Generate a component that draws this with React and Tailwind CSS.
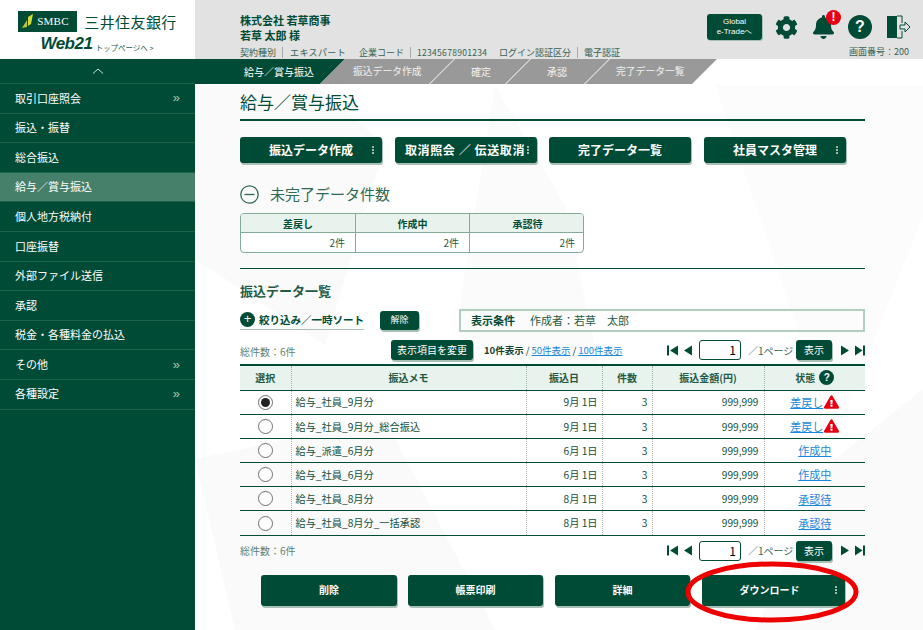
import React from "react";
import { FaCog, FaBell, FaExclamationTriangle } from "react-icons/fa";

const menu = [
  ["取引口座照会", true], ["振込・振替"], ["総合振込"], ["給与／賞与振込", false, true], ["個人地方税納付"], ["口座振替"],
  ["外部ファイル送信"], ["承認"], ["税金・各種料金の払込"], ["その他", true], ["各種設定", true],
];

const rows = [
  ["給与_社員_9月分", "9月 1日", "差戻し", true, true],
  ["給与_社員_9月分_総合振込", "9月 1日", "差戻し", true],
  ["給与_派遣_6月分", "6月 1日", "作成中"],
  ["給与_社員_6月分", "6月 1日", "作成中"],
  ["給与_社員_8月分", "8月 1日", "承認待"],
  ["給与_社員_8月分_一括承認", "8月 1日", "承認待"],
];

function Dots() {
  return (
    <span className="absolute right-[8px] top-1/2 -translate-y-1/2 flex flex-col gap-[1px]">
      <i className="block w-[2px] h-[2px] bg-[#9fbbb0]" />
      <i className="block w-[2px] h-[2px] bg-[#9fbbb0]" />
      <i className="block w-[2px] h-[2px] bg-[#9fbbb0]" />
    </span>
  );
}

function Btn({ children, className = "", dots }) {
  return (
    <div className={`relative flex items-center justify-center rounded-[3px] bg-[#004b35] text-white font-bold pb-[1px] shadow-[1px_2px_0_#a9c0b6] ${className}`}>
      {children}
      {dots && <Dots />}
    </div>
  );
}

function Pager() {
  return (
    <div className="flex items-center h-[20px] text-[#35614f]">
      <svg width="11" height="11" viewBox="0 0 11 11" className="fill-[#004b35]"><rect x="0" y="0.5" width="2" height="10" /><path d="M11 0.5v10L3 5.5z" /></svg>
      <svg width="10" height="11" viewBox="0 0 10 11" className="ml-[5px] fill-[#004b35]"><path d="M9 0.5v10L1 5.5z" /></svg>
      <div className="ml-[6px] w-[42px] h-[20px] border border-[#004b35] rounded-[3px] bg-white text-right pr-[4px] text-[12px] leading-[18px] text-black">1</div>
      <span className="ml-[7px] w-[48px] text-[10px] whitespace-nowrap">／1ページ</span>
      <Btn className="w-[36px] h-[20px] text-[10px] font-normal">表示</Btn>
      <svg width="10" height="11" viewBox="0 0 10 11" className="ml-[8px] fill-[#004b35]"><path d="M1 0.5v10L9 5.5z" /></svg>
      <svg width="10" height="11" viewBox="0 0 10 11" className="ml-[5px] fill-[#004b35]"><path d="M0 0.5v10L7.500 5.5z" /><rect x="8" y="0.5" width="2" height="10" /></svg>
    </div>
  );
}

const thClass = "font-bold text-[10px] text-[#1f5a45] border-r border-dotted border-[#9db5ab] last:border-r-0";
const tdClass = "border-r border-dotted border-[#b5b5b5] last:border-r-0 text-[10.200px] text-[#0f4f3b] p-0";

export default function App() {
  return (
    <div className="relative w-[923px] h-[630px] overflow-hidden bg-white font-['Noto_Sans_CJK_JP','Noto_Sans',sans-serif] text-[#004b35]">
      {/* header */}
      <header className="flex h-[59px] bg-[#e2e2e2]">
        <div className="w-[195px] h-full bg-white flex flex-col items-center pt-[11px]">
          <div className="flex items-center">
            <div className="flex items-center w-[59px] h-[21px] bg-[#004b35]">
              <svg width="20" height="21" viewBox="0 0 20 21"><path d="M4 17 L9 9 L9 16z" fill="#b7c72e" /><path d="M10 15 L10 6 L15 3 L13 13z" fill="#d5d936" /></svg>
              <span className="text-[11px] leading-none text-white font-['Liberation_Serif',serif] tracking-[0.2px] -ml-[1px]">SMBC</span>
            </div>
            <span className="ml-[7px] text-[15px] leading-none tracking-[0.4px] text-[#004b35]">三井住友銀行</span>
          </div>
          <div className="flex items-end -ml-[1px] mt-[3px] leading-none">
            <span className="text-[17px] font-bold italic font-['Liberation_Sans',sans-serif] tracking-[-0.5px] text-[#004b35]">Web21</span>
            <span className="ml-[3px] mb-[1px] text-[7.500px] text-[#1f5a45]">トップページへ &gt;</span>
          </div>
        </div>
        <div className="flex-1 flex justify-between pl-[45px] pr-[13px]">
          <div className="pt-[13px]">
            <div className="text-[11px] leading-[15px] font-bold">株式会社 若草商事</div>
            <div className="text-[11px] leading-[14px] font-bold">若草 太郎 様</div>
            <div className="flex items-center mt-[5px] text-[9px] leading-[11px] text-[#35614f] whitespace-nowrap">
              <span className="pr-[6px] border-r border-[#a8a8a8]">契約種別</span>
              <span className="pl-[7px] w-[75px] tracking-[0.4px]">エキスパート</span>
              <span className="ml-[1px] pr-[6px] border-r border-[#a8a8a8]">企業コード</span>
              <span className="pl-[6px] w-[88px] text-[8.500px] tracking-[0.3px]">12345678901234</span>
              <span className="pr-[6px] border-r border-[#a8a8a8]">ログイン認証区分</span>
              <span className="pl-[6px]">電子認証</span>
            </div>
          </div>
          <div className="flex flex-col items-end">
            <div className="flex items-center h-[26px] mt-[14px]">
              <div className="flex items-center justify-center w-[55px] h-[26px] rounded-[3px] bg-[#004b35] text-white text-[8px] leading-[10px] text-center font-['Liberation_Sans',sans-serif] shadow-[1px_1px_0_#a9c0b6]">Global<br />e-Tradeへ</div>
              <FaCog className="ml-[13px] w-[23px] h-[23px] text-[#004b35]" />
              <div className="relative ml-[14px] w-[24px] h-[24px]">
                <FaBell className="w-[23px] h-[24px] text-[#004b35]" />
                <div className="absolute -top-[5px] left-[14px] w-[15px] h-[15px] rounded-full bg-[#e60012] text-white text-[12px] leading-[15px] font-bold text-center font-['Liberation_Sans',sans-serif]">!</div>
              </div>
              <div className="ml-[12px] w-[24px] h-[24px] rounded-full bg-[#004b35] text-white text-[16px] leading-[24px] font-bold text-center font-['Liberation_Sans',sans-serif]">?</div>
              <svg width="23" height="24" viewBox="0 0 23 24" className="ml-[15px]">
                <path d="M0 1h10v22H0z" fill="#004b35" />
                <path d="M10 1h5v7M15 16v7h-5M13 10h5V7l5 5-5 5v-3h-5z" fill="none" stroke="#004b35" strokeWidth="1" />
              </svg>
            </div>
            <div className="mt-[6px] mr-[1px] text-[9px] leading-[11px] text-[#35614f] whitespace-nowrap">画面番号：200</div>
          </div>
        </div>
      </header>

      <div className="flex h-[571px]">
        {/* sidebar */}
        <aside className="w-[195px] shrink-0 bg-[#004b35] text-white">
          <div className="h-[25px] flex items-center justify-center border-b border-[#1d6149]">
            <svg width="12" height="6" viewBox="0 0 12 6" fill="none" stroke="#cfe0d9" strokeWidth="1"><path d="M1 5.500L6 1l5 4.500" /></svg>
          </div>
          {menu.map(([t, chev, active]) => (
            <div key={t} className={`h-[29.6px] flex items-center justify-between pl-[15px] pr-[15px] pb-[1px] border-b border-[#1d6149] text-[11px] ${active ? "bg-[#46806b]" : ""}`}>
              <span>{t}</span>
              {chev && <span className="text-[13px] leading-none text-[#a9c4b8] font-['Liberation_Sans',sans-serif]">»</span>}
            </div>
          ))}
        </aside>

        {/* main */}
        <main className="relative flex-1">
          <svg className="absolute inset-0 w-full h-full" viewBox="0 0 728 571" preserveAspectRatio="none">
            <path d="M0 26h120l70 60-60 200L0 200z" fill="#fafafa" />
            <path d="M300 26l70 120 40 190-150-60z" fill="#fbfbfb" />
            <path d="M520 26h208v130L640 380z" fill="#fcfcfc" />
            <path d="M0 400l190-40 110 211H40z" fill="#fafafa" />
            <path d="M640 400l88-70v241H560z" fill="#fafafa" />
          </svg>
          {/* tabs */}
          <div className="relative flex h-[26px] text-[10px] text-[#f2f2f2] whitespace-nowrap">
            <div className="relative w-[150px] h-[25px] bg-[#004b35] [clip-path:polygon(0_0,100%_0,125px_100%,0_100%)] flex items-center pl-[49px] text-white">給与／賞与振込</div>
            <div className="w-[134px] -ml-[25px] h-[25px] bg-[#999999] [clip-path:polygon(25px_0,100%_0,109px_100%,0_100%)] flex items-center pl-[33px] text-[9.800px]">振込データ作成</div>
            <div className="w-[100px] -ml-[24px] h-[25px] bg-[#999999] [clip-path:polygon(25px_0,100%_0,75px_100%,0_100%)] flex items-center pl-[41px]">確定</div>
            <div className="w-[103px] -ml-[24px] h-[25px] bg-[#999999] [clip-path:polygon(25px_0,100%_0,78px_100%,0_100%)] flex items-center pl-[41px]">承認</div>
            <div className="w-[132px] -ml-[24px] h-[25px] bg-[#999999] [clip-path:polygon(25px_0,100%_0,107px_100%,0_100%)] flex items-center pl-[31px] text-[9.800px]">完了データ一覧</div>
          </div>

          <div className="relative w-[625px] ml-[45px]">
            <h1 className="h-[36px] text-[17px] leading-[33px] font-normal border-b-2 border-[#004b35]">給与／賞与振込</h1>

            <div className="flex mt-[16px] text-[12px]">
              <Btn className="w-[142px] h-[26px]" dots>振込データ作成</Btn>
              <Btn className="w-[142px] h-[26px] ml-[13px] tracking-[0.6px] pr-[2px]" dots>取消照会 ／ 伝送取消</Btn>
              <Btn className="w-[142px] h-[26px] ml-[12px]">完了データ一覧</Btn>
              <Btn className="w-[142px] h-[26px] ml-[13px]" dots>社員マスタ管理</Btn>
            </div>

            <div className="flex items-center mt-[22px] h-[19px]">
              <svg width="19" height="19" viewBox="0 0 19 19" fill="none" stroke="#2c6a55" strokeWidth="1.300"><circle cx="9.500" cy="9.500" r="8.700" /><path d="M4.500 9.500h10" /></svg>
              <span className="ml-[11px] text-[15px] text-[#2c6a55]">未完了データ件数</span>
            </div>

            <div className="grid grid-cols-[115px_114px_115px] w-[344px] mt-[9px] h-[40px] border border-[#82ab98] rounded-[4px] overflow-hidden text-[10px] bg-white">
              {["差戻し", "作成中", "承認待"].map((t, i) => (
                <div key={t} className={`h-[19px] leading-[19px] text-center font-bold bg-[#e9f3ee] border-b border-[#82ab98] ${i < 2 ? "border-r" : ""}`}>{t}</div>
              ))}
              {[0, 1, 2].map((i) => (
                <div key={i} className={`leading-[19px] text-right pr-[10px] text-[#1f5a45] ${i < 2 ? "border-r border-[#82ab98]" : ""}`}>2件</div>
              ))}
            </div>

            <div className="mt-[15px] border-t border-[#004b35]" />

            <div className="mt-[13px] text-[13px] leading-[17px] font-bold text-[#1f5a45]">振込データ一覧</div>

            <div className="flex items-start mt-[10px] h-[23px]">
              <div className="flex items-center w-[124px] h-[20px] mt-[1px] border-b border-[#a9c0b6]">
                <div className="shrink-0 w-[15px] h-[15px] rounded-full bg-[#004b35] text-white text-[13px] leading-[14px] text-center font-['Liberation_Sans',sans-serif]">+</div>
                <span className="ml-[4px] text-[10.500px] font-bold whitespace-nowrap">絞り込み／一時ソート</span>
              </div>
              <Btn className="w-[39px] h-[19px] ml-[16px] mt-[2px] text-[9px] font-normal">解除</Btn>
              <div className="flex items-center w-[406px] h-[23px] ml-[40px] border-2 border-[#b3cdbf] pl-[10px] text-[11px] text-[#1f5a45]">
                <span className="font-bold text-[#004b35]">表示条件</span>
                <span className="ml-[15px]">作成者：若草　太郎</span>
              </div>
            </div>

            <div className="flex items-center mt-[8px] h-[20px]">
              <span className="w-[151px] text-[10px] text-[#5c7f71] pt-[2px]">総件数：6件</span>
              <Btn className="w-[82px] h-[20px] text-[10px] font-normal">表示項目を変更</Btn>
              <span className="ml-[11px] text-[9.500px] whitespace-nowrap">
                <b className="text-[#123f30]">10件表示</b><span className="mx-[2px]">/</span><a className="text-[#1b87d8] underline">50件表示</a><span className="mx-[2px]">/</span><a className="text-[#1b87d8] underline">100件表示</a>
              </span>
              <div className="ml-auto"><Pager /></div>
            </div>

            <table className="w-full mt-[4px] table-fixed border-collapse border-t-2 border-[#004b35]">
              <colgroup>
                <col className="w-[51px]" /><col className="w-[235px]" /><col className="w-[76px]" /><col className="w-[50px]" /><col className="w-[112px]" /><col className="w-[101px]" />
              </colgroup>
              <thead>
                <tr className="h-[25px] bg-[#e9f3ee] border-b border-[#004b35]">
                  <th className={thClass}>選択</th><th className={thClass}>振込メモ</th><th className={thClass}>振込日</th><th className={thClass}>件数</th><th className={thClass}>振込金額(円)</th>
                  <th className={thClass}>
                    <span className="inline-flex items-center">状態<span className="ml-[4px] w-[15px] h-[15px] rounded-full bg-[#004b35] text-white text-[10px] leading-[15px] font-bold font-['Liberation_Sans',sans-serif]">?</span></span>
                  </th>
                </tr>
              </thead>
              <tbody>
                {rows.map(([memo, date, status, warn, sel]) => (
                  <tr key={memo} className="h-[24.200px] border-b border-[#004b35]">
                    <td className={tdClass}>
                      <div className="mx-auto flex items-center justify-center w-[15px] h-[15px] rounded-full border border-[#6f6f6f] bg-white">
                        {sel && <div className="w-[9px] h-[9px] rounded-full bg-[#222]" />}
                      </div>
                    </td>
                    <td className={`${tdClass} pl-[4px]`}>{memo}</td>
                    <td className={`${tdClass} text-right pr-[4px]`}>{date}</td>
                    <td className={`${tdClass} text-right pr-[4px]`}>3</td>
                    <td className={`${tdClass} text-right pr-[5px]`}>999,999</td>
                    <td className={`${tdClass} text-center text-[11px]`}>
                      <span className="inline-flex items-center justify-center">
                        <a className="text-[#1b87d8] underline">{status}</a>
                        {warn && <FaExclamationTriangle className="ml-[1px] w-[15px] h-[14px] text-[#e60012]" />}
                      </span>
                    </td>
                  </tr>
                ))}
              </tbody>
            </table>

            <div className="flex items-center justify-between mt-[5px] h-[20px]">
              <span className="text-[10px] text-[#5c7f71]">総件数：6件</span>
              <Pager />
            </div>

            <div className="flex mt-[14px] ml-[21px] text-[10px]">
              <Btn className="w-[136px] h-[31px]">削除</Btn>
              <Btn className="w-[135px] h-[31px] ml-[11px]">帳票印刷</Btn>
              <Btn className="w-[135px] h-[31px] ml-[12px]">詳細</Btn>
              <Btn className="w-[143px] h-[31px] ml-[12px] pr-[8px]" dots>ダウンロード</Btn>
            </div>
          </div>

          <svg className="absolute left-[489px] top-[500px]" width="176" height="66" viewBox="0 0 176 66" fill="none">
            <ellipse cx="88" cy="33" rx="84" ry="28" stroke="#ee0000" strokeWidth="5" />
          </svg>
        </main>
      </div>
    </div>
  );
}
